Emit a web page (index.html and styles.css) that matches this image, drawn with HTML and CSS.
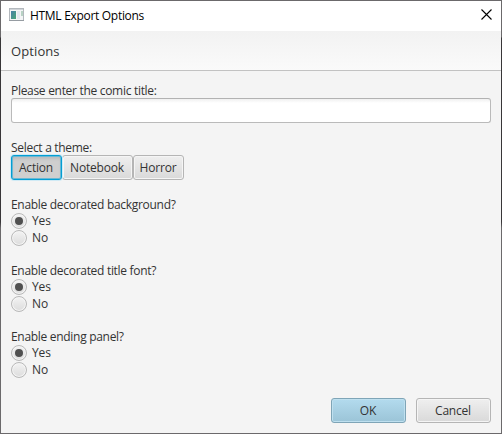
FILE: index.html
```html
<!DOCTYPE html>
<html lang="en">
<head>
<meta charset="utf-8">
<title>HTML Export Options</title>
<link rel="stylesheet" href="styles.css">
</head>
<body>
<div class="window">
  <div class="titlebar">
    <svg class="app-icon" width="16" height="14" viewBox="0 0 16 14">
      <defs><linearGradient id="g" x1="0" y1="0" x2="1" y2="1"><stop offset="0" stop-color="#477fa8"/><stop offset="1" stop-color="#49a678"/></linearGradient></defs>
      <rect x=".5" y=".5" width="14" height="12" fill="#f4f5f6" stroke="#b3b8bd"/>
      <path d="M1 1.5h13" stroke="#d0d4d8"/>
      <path d="M0 12.5h15" stroke="#969ca2"/>
      <rect x="2" y="3" width="5" height="8" fill="url(#g)"/>
      <rect x="8" y="3" width="3" height="8" fill="#e4e8ef"/>
      <rect x="12" y="3" width="2" height="5" fill="#b8d2c4"/>
    </svg>
    <span class="caption">HTML Export Options</span>
    <svg class="close" width="11" height="11" viewBox="0 0 11 11"><path d="M.5.5l10 10M10.5.5l-10 10" stroke="#000" stroke-width="1.1"/></svg>
  </div>
  <div class="header"><span>Options</span></div>
  <div class="content">
    <label class="line t-title" for="title">Please enter the comic title:</label>
    <input class="field" id="title" type="text">
    <div class="line t-theme">Select a theme:</div>
    <div class="themes">
      <button class="btn action selected"><span>Action</span></button>
      <button class="btn notebook"><span>Notebook</span></button>
      <button class="btn horror"><span>Horror</span></button>
    </div>
    <div class="group">
      <div class="line t-bg">Enable decorated background?</div>
      <div class="option"><i class="radio on"></i><span>Yes</span></div>
      <div class="option"><i class="radio"></i><span>No</span></div>
    </div>
    <div class="group">
      <div class="line t-font">Enable decorated title font?</div>
      <div class="option"><i class="radio on"></i><span>Yes</span></div>
      <div class="option"><i class="radio"></i><span>No</span></div>
    </div>
    <div class="group">
      <div class="line t-end">Enable ending panel?</div>
      <div class="option"><i class="radio on"></i><span>Yes</span></div>
      <div class="option"><i class="radio"></i><span>No</span></div>
    </div>
  </div>
  <div class="footer">
    <button class="btn ok"><span>OK</span></button>
    <button class="btn cancel"><span>Cancel</span></button>
  </div>
</div>
</body>
</html>
```
FILE: styles.css
```css
* { box-sizing: border-box; }
body { margin: 0; overflow: hidden; }
.window {
  width: 502px; height: 434px;
  display: flex; flex-direction: column;
  border: 1px solid;
  border-image: linear-gradient(#6b696b 37px, #383638 38px, #383638 222px, #6b696b 228px) 1;
  background: #f4f4f4;
  color: #333;
  font: 12px/16px "Open Sans", "Noto Sans", sans-serif;
  letter-spacing: -0.3px;
  white-space: nowrap;
}
.titlebar { height: 30px; display: flex; align-items: center; padding: 0 9px 0 8px; background: #fff; color: #000; }
.app-icon { margin-bottom: 2px; }
.caption { margin-left: 5px; }
.close { margin-left: auto; margin-bottom: 3px; }
.header {
  height: 40px; display: flex; align-items: center; padding-left: 10px;
  border-bottom: 1px solid #c2c2c2;
  background: linear-gradient(#f2f2f2, #fafafa);
  font-size: 13px; letter-spacing: 0.1px;
}
.content { flex: 1; display: flex; flex-direction: column; padding: 11px 10px 0; }
.line { height: 16px; padding-top: 1px; }
.field {
  width: 480px; height: 25px; padding: 0 7px;
  border: 1px solid #bababa; border-top-color: #b2b2b2; border-radius: 3px;
  background: linear-gradient(#f0f0f0, #fff 4px); outline: 0;
}
.t-theme { margin-top: 16px; }
.themes { display: flex; }
.btn {
  height: 25px; padding: 1px 1px 0 0; border: 1px solid #b5b5b5; border-radius: 3px;
  background: linear-gradient(#efefef, #d9d9d9);
  box-shadow: inset 0 0 0 1px #f5f5f5;
  color: #333; font: inherit; letter-spacing: -0.2px;
}
.action { width: 51px; }
.notebook { width: 71px; }
.horror { width: 51px; }
.selected {
  border-color: #039ed3;
  background: #cfcfcf;
  box-shadow: 0 0 0 1px #d0eaf5, inset 0 0 0 1px #69b8d4, inset 0 3px 3px #bcbcbc;
  position: relative;
}
.group { margin-top: 16px; }
.option { height: 17px; display: flex; align-items: center; gap: 5px; }
.option span { padding-top: 1px; letter-spacing: -0.15px; }
.radio {
  width: 16px; height: 16px; border: 1px solid #b9b9b9; border-radius: 50%;
  background: linear-gradient(#f3f3f3, #dcdcdc);
  box-shadow: inset 0 0 0 1px #f5f5f5;
  display: grid; place-items: center;
}
.on::after { content: ""; width: 8px; height: 8px; border-radius: 50%; background: #505050; }
.footer { display: flex; justify-content: flex-end; gap: 10px; padding: 0 10px 10px; }
.footer .btn { width: 75px; }
.footer .ok {
  border-color: #7fa5b7;
  background: linear-gradient(#b3dbee, #9bc4d7);
  box-shadow: inset 0 0 0 1px #bfe0ef;
}
```
